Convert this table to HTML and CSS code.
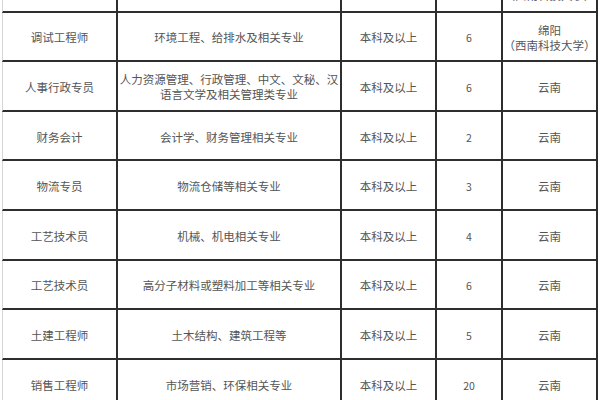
FILE: index.html
```html
<!DOCTYPE html>
<html lang="zh-CN">
<head>
<meta charset="utf-8">
<link rel="stylesheet" href="styles.css">
</head>
<body>
<div class="page">
<table class="jobs">
<colgroup>
<col class="c1"><col class="c2"><col class="c3"><col class="c4"><col class="c5">
</colgroup>
<tbody>
<tr><td></td><td></td><td></td><td></td><td>绵阳<br>（西南科技大学）</td></tr>
<tr><td>调试工程师</td><td>环境工程、给排水及相关专业</td><td>本科及以上</td><td class="num">6</td><td>绵阳<br>（西南科技大学）</td></tr>
<tr><td>人事行政专员</td><td>人力资源管理、行政管理、中文、文秘、汉<br>语言文学及相关管理类专业</td><td>本科及以上</td><td class="num">6</td><td>云南</td></tr>
<tr><td>财务会计</td><td>会计学、财务管理相关专业</td><td>本科及以上</td><td class="num">2</td><td>云南</td></tr>
<tr><td>物流专员</td><td>物流仓储等相关专业</td><td>本科及以上</td><td class="num">3</td><td>云南</td></tr>
<tr><td>工艺技术员</td><td>机械、机电相关专业</td><td>本科及以上</td><td class="num">4</td><td>云南</td></tr>
<tr><td>工艺技术员</td><td>高分子材料或塑料加工等相关专业</td><td>本科及以上</td><td class="num">6</td><td>云南</td></tr>
<tr><td>土建工程师</td><td>土木结构、建筑工程等</td><td>本科及以上</td><td class="num">5</td><td>云南</td></tr>
<tr><td>销售工程师</td><td>市场营销、环保相关专业</td><td>本科及以上</td><td class="num">20</td><td>云南</td></tr>
</tbody>
</table>
</div>
</body>
</html>
```
FILE: styles.css
```css
html, body {
  margin: 0;
  padding: 0;
  background: #ffffff;
}
.page {
  width: 600px;
  height: 400px;
  overflow: hidden;
}
.jobs {
  margin: -37px 0 0 2px;
  border-collapse: separate;
  border-spacing: 0;
  table-layout: fixed;
  width: 596px;
  font-family: "Noto Sans CJK SC", "Noto Sans", sans-serif;
  font-size: 11.5px;
  line-height: 15px;
  color: #555555;
}
.c1 { width: 116px; }
.c2 { width: 224px; }
.c3 { width: 95px; }
.c4 { width: 66px; }
.c5 { width: 95px; }
.jobs td {
  box-sizing: border-box;
  height: 49.6px;
  padding: 3px 0 0 0;
  text-align: center;
  vertical-align: middle;
  border-right: 2px solid #2e2e2e;
  border-bottom: 2px solid #2e2e2e;
  white-space: nowrap;
}
.jobs td:first-child {
  border-left: 1px solid #d6d6d6;
}
.jobs td.num {
  font-size: 10.5px;
}
```
